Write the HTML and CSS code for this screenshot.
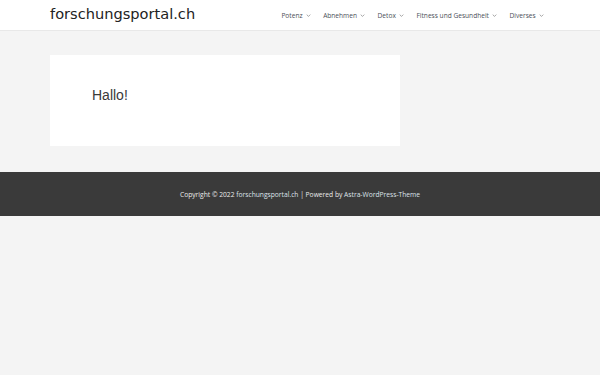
FILE: index.html
```html
<!DOCTYPE html>
<html lang="de">
<head>
<meta charset="utf-8">
<title>forschungsportal.ch</title>
<link rel="stylesheet" href="styles.css">
</head>
<body>
<header class="site-header">
  <div class="container header-inner">
    <a class="logo" href="#">forschungsportal.ch</a>
    <nav class="menu">
      <a class="menu-item" href="#">Potenz <span class="caret"><svg viewBox="0 0 8 5" width="5" height="3"><path d="M1 1l3 3 3-3" fill="none" stroke="currentColor" stroke-width="1.1"/></svg></span></a>
      <a class="menu-item" href="#">Abnehmen <span class="caret"><svg viewBox="0 0 8 5" width="5" height="3"><path d="M1 1l3 3 3-3" fill="none" stroke="currentColor" stroke-width="1.1"/></svg></span></a>
      <a class="menu-item" href="#">Detox <span class="caret"><svg viewBox="0 0 8 5" width="5" height="3"><path d="M1 1l3 3 3-3" fill="none" stroke="currentColor" stroke-width="1.1"/></svg></span></a>
      <a class="menu-item" href="#">Fitness und Gesundheit <span class="caret"><svg viewBox="0 0 8 5" width="5" height="3"><path d="M1 1l3 3 3-3" fill="none" stroke="currentColor" stroke-width="1.1"/></svg></span></a>
      <a class="menu-item" href="#">Diverses <span class="caret"><svg viewBox="0 0 8 5" width="5" height="3"><path d="M1 1l3 3 3-3" fill="none" stroke="currentColor" stroke-width="1.1"/></svg></span></a>
    </nav>
  </div>
</header>
<main class="container main">
  <article class="card">
    <h1 class="card-title">Hallo!</h1>
  </article>
</main>
<footer class="site-footer">
  <p class="footer-text">Copyright © 2022 <a href="#">forschungsportal.ch</a> | Powered by <a href="#">Astra-WordPress-Theme</a></p>
</footer>
</body>
</html>
```
FILE: styles.css
```css
html, body {
  margin: 0;
  padding: 0;
  background: #f4f4f4;
  font-family: "Open Sans", "DejaVu Sans", sans-serif;
  color: #3a3a3a;
}
a { text-decoration: none; color: inherit; }
.container {
  width: 500px;
  margin: 0 auto;
}
.site-header {
  background: #fff;
  border-bottom: 1px solid #e8e8e8;
}
.header-inner {
  height: 30px;
  display: flex;
  align-items: center;
  justify-content: space-between;
}
.logo {
  font-family: "DejaVu Sans", sans-serif;
  font-size: 14.6px;
  color: #222;
  line-height: 1;
  margin-top: -1px;
}
.menu {
  display: flex;
  align-items: center;
  margin-right: 0;
}
.menu-item {
  font-size: 6.6px;
  color: #4b4f58;
  padding: 0 6.3px;
  display: flex;
  align-items: center;
}
.caret {
  display: inline-flex;
  margin-left: 3px;
  color: #777;
}
.main {
  padding: 24px 0 26px;
}
.card {
  width: 350px;
  height: 91px;
  background: #fff;
  box-sizing: border-box;
  padding: 32px 0 0 42px;
}
.card-title {
  margin: 0;
  font-family: "Liberation Sans", Arial, sans-serif;
  font-weight: normal;
  font-size: 14px;
  line-height: 16px;
  color: #3a3a3a;
}
.site-footer {
  background: #3a3a3a;
  height: 44px;
  display: flex;
  align-items: center;
  justify-content: center;
}
.footer-text {
  margin: 0;
  font-size: 6.7px;
  color: #ebebeb;
}
.footer-text a { color: #dde3ea; }
```
